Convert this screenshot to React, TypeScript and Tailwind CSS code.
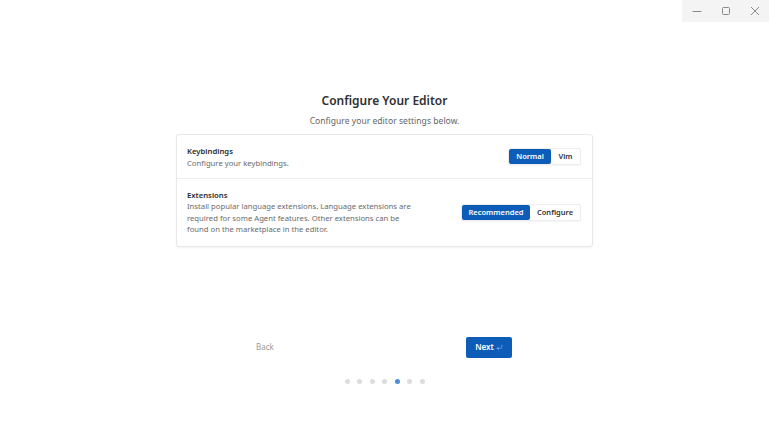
import { CornerDownLeft } from 'lucide-react';

function WindowControls() {
  return (
    <div className="absolute top-0 right-0 flex h-[22px] w-[87px] items-center bg-[#f4f4f4] text-[#8a8a8a]">
      <div className="flex w-[29px] justify-center">
        <svg width="10" height="10" viewBox="0 0 10 10">
          <path d="M0.5 5.5h9" stroke="currentColor" strokeWidth="1" />
        </svg>
      </div>
      <div className="flex w-[29px] justify-center">
        <svg width="10" height="10" viewBox="0 0 10 10">
          <rect x="1.5" y="1.5" width="7" height="7" rx="1" fill="none" stroke="currentColor" strokeWidth="1" />
        </svg>
      </div>
      <div className="flex w-[29px] justify-center">
        <svg width="10" height="10" viewBox="0 0 10 10">
          <path d="M1 1l8 8M9 1l-8 8" stroke="currentColor" strokeWidth="1" />
        </svg>
      </div>
    </div>
  );
}

function Segmented({ options, active }: { options: { label: string; w: string }[]; active: number }) {
  return (
    <div className="flex rounded-[2px] border border-[#ededed] bg-white shadow-[0_1px_1px_rgba(0,0,0,0.04)]">
      {options.map((o, i) => (
        <div
          key={o.label}
          className={
            'flex h-[15px] items-center justify-center rounded-[2px] text-[7.5px] font-semibold ' +
            o.w +
            (i === active ? ' bg-[#0c5cb8] text-white' : ' text-[#333]')
          }
        >
          {o.label}
        </div>
      ))}
    </div>
  );
}

export default function App() {
  const dots = [0, 1, 2, 3, 4, 5, 6];

  return (
    <div className="relative h-[431px] w-[769px] overflow-hidden bg-white font-['Noto_Sans',sans-serif] text-[#333]">
      <WindowControls />

      <div className="flex flex-col items-center pt-[92px]">
        <h1 className="text-[12px] font-semibold leading-[18px] text-[#2f2f2f]">Configure Your Editor</h1>
        <p className="mt-[4px] text-[8.6px] leading-[14px] text-[#666]">Configure your editor settings below.</p>

        <div className="mt-[6px] w-[417px] rounded-[3px] border border-[#e8e8e8] bg-white shadow-[0_1px_2px_rgba(0,0,0,0.05)]">
          <div className="flex h-[44px] items-center justify-between border-b border-[#eeeeee] pl-[10px] pr-[11px]">
            <div className="flex flex-col">
              <span className="text-[7.7px] font-semibold leading-[12px] text-[#2a2a2a]">Keybindings</span>
              <span className="text-[7.7px] leading-[12px] text-[#6a6a6a]">Configure your keybindings.</span>
            </div>
            <Segmented
              active={0}
              options={[
                { label: 'Normal', w: 'w-[42px]' },
                { label: 'Vim', w: 'w-[29px]' },
              ]}
            />
          </div>

          <div className="flex items-center justify-between py-[10px] pl-[10px] pr-[11px]">
            <div className="flex flex-col">
              <span className="text-[7.7px] font-semibold leading-[12px] text-[#2a2a2a]">Extensions</span>
              <span className="text-[7.7px] leading-[11.5px] text-[#6a6a6a]">
                Install popular language extensions. Language extensions are
                <br />
                required for some Agent features. Other extensions can be
                <br />
                found on the marketplace in the editor.
              </span>
            </div>
            <Segmented
              active={0}
              options={[
                { label: 'Recommended', w: 'w-[68px]' },
                { label: 'Configure', w: 'w-[50px]' },
              ]}
            />
          </div>
        </div>

        <div className="mt-[90px] flex w-full items-center gap-[178px] pl-[242px]">
          <button className="flex h-[21px] w-[46px] items-center justify-center text-[8px] text-[#9a9a9a]">
            Back
          </button>
          <button className="flex h-[21px] w-[46px] items-center justify-center gap-[2px] rounded-[2px] bg-[#0c5cb8] text-[8px] font-semibold text-white">
            Next
            <CornerDownLeft size={7} strokeWidth={2} className="text-white/60" />
          </button>
        </div>

        <div className="mt-[21px] flex items-center gap-[7.5px]">
          {dots.map((d) => (
            <div
              key={d}
              className={'h-[5px] w-[5px] rounded-full ' + (d === 4 ? 'bg-[#4a8fd8]' : 'bg-[#dcdcdc]')}
            />
          ))}
        </div>
      </div>
    </div>
  );
}
